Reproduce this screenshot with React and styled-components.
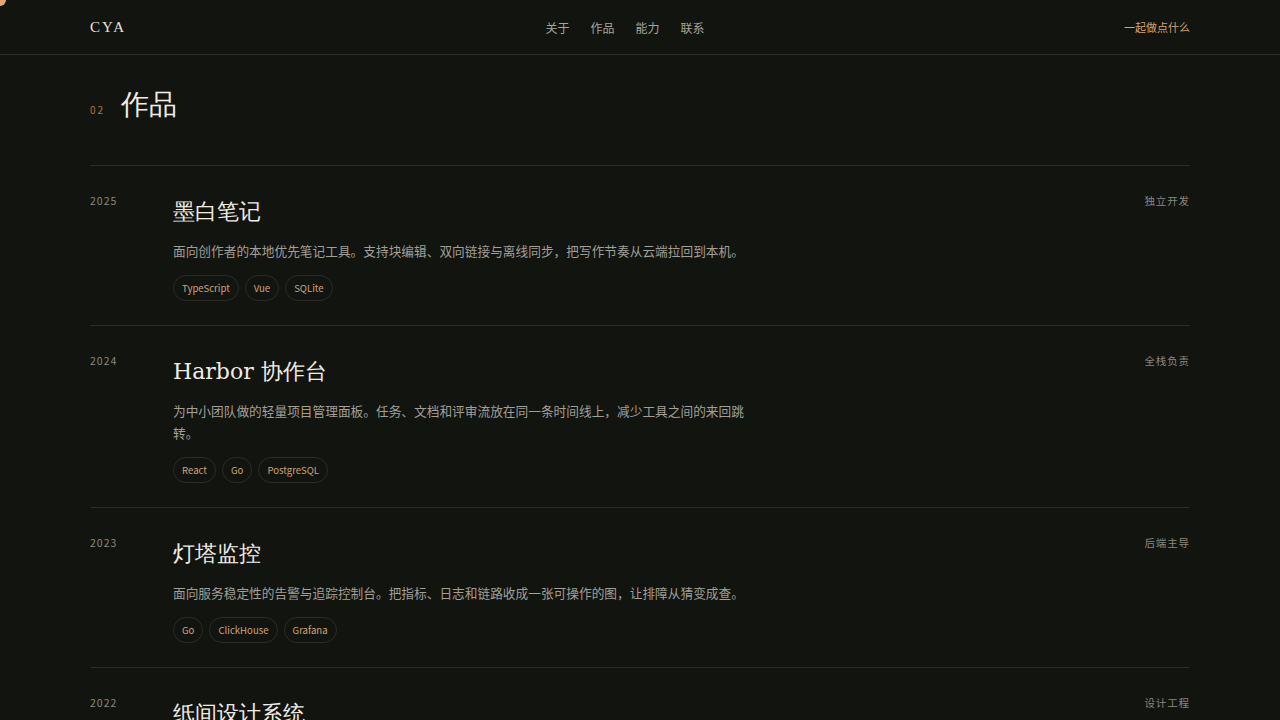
import styled, { createGlobalStyle } from "styled-components";

const projects = [
  {
    year: "2025",
    title: "墨白笔记",
    desc: "面向创作者的本地优先笔记工具。支持块编辑、双向链接与离线同步，把写作节奏从云端拉回到本机。",
    tags: ["TypeScript", "Vue", "SQLite"],
    role: "独立开发",
  },
  {
    year: "2024",
    title: "Harbor 协作台",
    desc: "为中小团队做的轻量项目管理面板。任务、文档和评审流放在同一条时间线上，减少工具之间的来回跳转。",
    tags: ["React", "Go", "PostgreSQL"],
    role: "全栈负责",
  },
  {
    year: "2023",
    title: "灯塔监控",
    desc: "面向服务稳定性的告警与追踪控制台。把指标、日志和链路收成一张可操作的图，让排障从猜变成查。",
    tags: ["Go", "ClickHouse", "Grafana"],
    role: "后端主导",
  },
  {
    year: "2022",
    title: "纸间设计系统",
    desc: "一套面向内容产品的设计规范与组件库，统一排版、色彩与交互细节。",
    tags: ["Figma", "React", "Storybook"],
    role: "设计工程",
  },
];

export default function App() {
  return (
    <>
      <GlobalStyle />
      <CursorDot />
      <Header>
        <HeaderInner>
          <Logo>CYA</Logo>
          <Nav>
            <NavLink href="#">关于</NavLink>
            <NavLink href="#">作品</NavLink>
            <NavLink href="#">能力</NavLink>
            <NavLink href="#">联系</NavLink>
          </Nav>
          <Cta href="#">一起做点什么</Cta>
        </HeaderInner>
      </Header>
      <Section>
        <SectionHead>
          <SectionNum>02</SectionNum>
          <SectionTitle>作品</SectionTitle>
        </SectionHead>
        <List>
          {projects.map((p) => (
            <Row key={p.year}>
              <Year>{p.year}</Year>
              <Body>
                <Title>{p.title}</Title>
                <Desc>{p.desc}</Desc>
                <Tags>
                  {p.tags.map((t) => (
                    <Tag key={t}>{t}</Tag>
                  ))}
                </Tags>
              </Body>
              <Role>{p.role}</Role>
            </Row>
          ))}
        </List>
      </Section>
    </>
  );
}

const GlobalStyle = createGlobalStyle`
  html, body {
    margin: 0;
    background: #121410;
    color: #e8e4da;
    font-family: "Noto Sans CJK SC", "Noto Sans", sans-serif;
  }
  * { box-sizing: border-box; }
`;

const CursorDot = styled.div`
  position: fixed;
  left: -6px;
  top: -6px;
  width: 12px;
  height: 12px;
  border-radius: 50%;
  background: #e0a878;
  z-index: 10;
`;

const Header = styled.header`
  border-bottom: 1px solid #2a2c26;
`;

const HeaderInner = styled.div`
  width: 1100px;
  margin: 0 auto;
  height: 54px;
  display: flex;
  justify-content: space-between;
  align-items: center;
`;

const Logo = styled.div`
  font-family: "Liberation Serif", "DejaVu Serif", serif;
  font-size: 15px;
  letter-spacing: 2px;
  color: #e8e4da;
`;

const Nav = styled.nav`
  display: flex;
  gap: 21px;
`;

const NavLink = styled.a`
  text-decoration: none;
  color: #a8a59c;
  font-size: 12px;
`;

const Cta = styled.a`
  text-decoration: none;
  color: #d4a36f;
  font-size: 11px;
`;

const Section = styled.section`
  width: 1100px;
  margin: 0 auto;
  padding-top: 30px;
`;

const SectionHead = styled.div`
  display: flex;
  align-items: baseline;
  gap: 16px;
  height: 40px;
  margin-bottom: 40px;
`;

const SectionNum = styled.span`
  font-size: 10px;
  letter-spacing: 2px;
  color: #c26d3e;
`;

const SectionTitle = styled.h2`
  margin: 0;
  font-family: "DejaVu Serif", "Liberation Serif", serif;
  font-weight: 500;
  font-size: 28px;
  line-height: 40px;
  color: #f0ece2;
`;

const List = styled.div`
  border-top: 1px solid #2a2c26;
`;

const Row = styled.article`
  display: grid;
  grid-template-columns: 83px 1fr auto;
  padding: 30px 0 24px;
  border-bottom: 1px solid #2a2c26;
`;

const Year = styled.div`
  font-size: 10.5px;
  letter-spacing: 1px;
  line-height: 10px;
  color: #8a877e;
`;

const Body = styled.div`
  display: flex;
  flex-direction: column;
`;

const Title = styled.h3`
  margin: 0;
  font-family: "DejaVu Serif", "Liberation Serif", serif;
  font-weight: 500;
  font-size: 22px;
  line-height: 32px;
  color: #f0ece2;
`;

const Desc = styled.p`
  margin: 12px 0 0;
  max-width: 580px;
  font-size: 12.7px;
  line-height: 22px;
  color: #a29f96;
`;

const Tags = styled.div`
  display: flex;
  gap: 6px;
  margin-top: 13px;
`;

const Tag = styled.span`
  height: 26px;
  padding: 0 8px;
  display: flex;
  align-items: center;
  border: 1px solid #2e2b23;
  border-radius: 13px;
  font-size: 9.6px;
  color: #d0a477;
`;

const Role = styled.div`
  font-size: 10.5px;
  letter-spacing: 0.9px;
  line-height: 10px;
  color: #8a877e;
`;
